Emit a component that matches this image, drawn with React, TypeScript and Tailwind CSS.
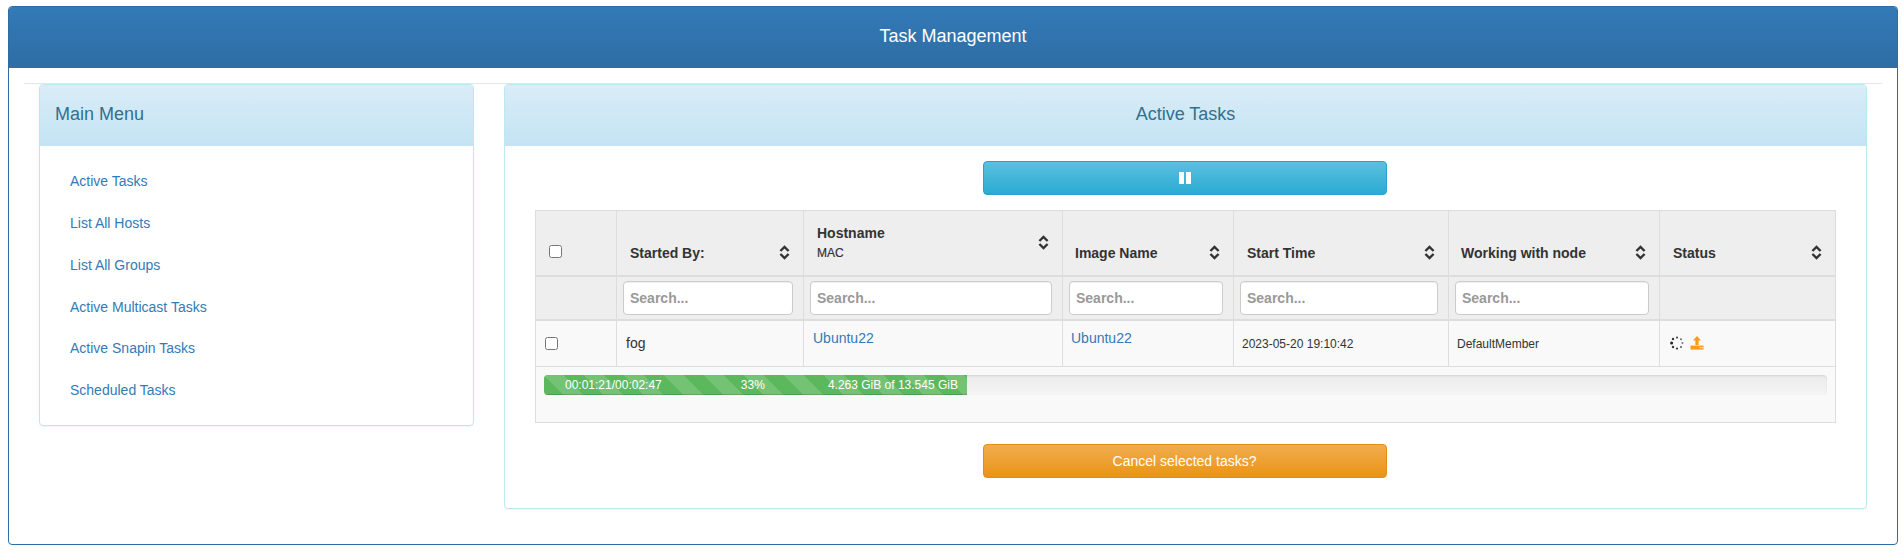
const FONT = "font-['Liberation_Sans',Arial,sans-serif]"

const MENU = [
  'Active Tasks',
  'List All Hosts',
  'List All Groups',
  'Active Multicast Tasks',
  'Active Snapin Tasks',
  'Scheduled Tasks',
]

function SortIcon() {
  return (
    <svg width="11" height="15" viewBox="0 0 11 15" className="shrink-0 text-[#333]" fill="none" stroke="currentColor" strokeWidth="2.4">
      <path d="M1.4 6 5.5 2l4.1 4" />
      <path d="M1.4 9 5.5 13l4.1-4" />
    </svg>
  )
}

function Spinner() {
  const dots = [
    [7, 1.6, 0.8, 1.1],
    [11, 3.2, 0.65, 1],
    [12.4, 7, 0.6, 1],
    [11, 11, 0.75, 1],
    [7, 12.6, 0.85, 1.1],
    [3, 11, 0.9, 1.2],
    [1.6, 7, 1, 1.5],
    [3, 3, 0.9, 1.2],
  ]
  return (
    <svg width="14" height="14" viewBox="0 0 14 14">
      {dots.map(([cx, cy, o, r]) => (
        <circle key={`${cx}-${cy}`} cx={cx} cy={cy} r={r} fill="#222" opacity={o} />
      ))}
    </svg>
  )
}

function UploadIcon() {
  return (
    <svg width="14" height="14" viewBox="0 0 14 14">
      <path d="M7 0 11 4.6H8.6V9H5.4V4.6H3Z" fill="#ff9a14" />
      <path d="M0.5 9.6h13V13.6H0.5Z" fill="#ff9a14" />
      <rect x="9.6" y="11" width="1.2" height="1.2" fill="#fff" />
      <rect x="11.6" y="11" width="1.2" height="1.2" fill="#fff" />
    </svg>
  )
}

function SortHead({ label, tight }: { label: string; tight?: boolean }) {
  return (
    <th className={`border border-[#ddd] border-b-2 pt-[30px] pr-[13px] pb-[12px] align-bottom text-left ${tight ? 'pl-[12px]' : 'pl-[13px]'}`}>
      <div className="flex items-center justify-between leading-[20px]">
        <span>{label}</span>
        <SortIcon />
      </div>
    </th>
  )
}

function SearchCell() {
  return (
    <th className="border border-[#ddd] border-b-2 py-[4px] pr-[10px] pl-[6px]">
      <input
        placeholder="Search..."
        className="block h-[34px] w-full rounded-[4px] border border-[#ccc] bg-white px-[6px] text-[14px] font-bold text-[#555] shadow-[inset_0_1px_1px_rgba(0,0,0,0.075)] placeholder:text-[#999]"
      />
    </th>
  )
}

export default function App() {
  return (
    <div className={`${FONT} bg-white pt-[6px] pr-[4px] pb-[12px] pl-[8px] text-[14px] text-[#333]`}>
      <div className="h-[539px] rounded-[4px] border border-[#2e6da4]">
        <h1 className="flex h-[61px] items-center justify-center rounded-t-[3px] bg-[linear-gradient(to_bottom,#337ab7,#2e6da4)] pb-[2px] text-[18px] font-normal text-white">
          Task Management
        </h1>
        <div className="px-[15px] pt-[15px]">
          <hr className="border-t border-[#e5e5e5]" />
        </div>
        <div className="flex items-start gap-[30px] px-[30px]">
          <aside className="w-[435px] shrink-0 rounded-[4px] border border-[#bce8f1] shadow-[0_1px_1px_rgba(0,0,0,0.05)]">
            <div className="flex h-[61px] items-center rounded-t-[3px] bg-[linear-gradient(to_bottom,#d9edf7,#c4e3f3)] px-[15px] pb-[3px] text-[18px] text-[#31708f]">
              Main Menu
            </div>
            <ul className="pt-[14px] pb-[14px]">
              {MENU.map((item) => (
                <li key={item} className="px-[30px] py-[10.95px] leading-[20px]">
                  <a className="text-[#337ab7]">{item}</a>
                </li>
              ))}
            </ul>
          </aside>

          <main className="min-w-0 flex-1 rounded-[4px] border border-[#bce8f1] shadow-[0_1px_1px_rgba(0,0,0,0.05)]">
            <div className="flex h-[61px] items-center justify-center rounded-t-[3px] bg-[linear-gradient(to_bottom,#d9edf7,#c4e3f3)] pb-[3px] text-[18px] text-[#31708f]">
              Active Tasks
            </div>
            <div className="flex flex-col px-[30px] pt-[15px] pb-[30px]">
              <button className="mx-auto flex h-[34px] w-[404px] -translate-x-px items-center justify-center rounded-[4px] border border-[#28a4c9] bg-[linear-gradient(to_bottom,#5bc0de,#2aabd2)] text-white">
                <svg width="14" height="14" viewBox="0 0 14 14" fill="#fff">
                  <rect x="1" y="1" width="5" height="12" />
                  <rect x="8" y="1" width="5" height="12" />
                </svg>
              </button>

              <table className="mt-[15px] w-full table-fixed border-collapse bg-[#f9f9f9] text-[14px]">
                <colgroup>
                  <col className="w-[81px]" />
                  <col className="w-[187px]" />
                  <col className="w-[259px]" />
                  <col className="w-[171px]" />
                  <col className="w-[215px]" />
                  <col className="w-[211px]" />
                  <col className="w-[176px]" />
                </colgroup>
                <thead className="bg-[#eee] font-bold">
                  <tr className="h-[65px]">
                    <th className="border border-[#ddd] border-b-2 pt-[17px] pl-[13px] text-left align-middle">
                      <input type="checkbox" className="block h-[13px] w-[13px]" />
                    </th>
                    <SortHead label="Started By:" />
                    <th className="border border-[#ddd] border-b-2 px-[13px] text-left align-middle">
                      <div className="flex items-center justify-between">
                        <div>
                          <div className="leading-[20px]">Hostname</div>
                          <div className="mt-[2px] text-[12px] leading-[17px] font-normal [-webkit-text-stroke:0.2px]">MAC</div>
                        </div>
                        <SortIcon />
                      </div>
                    </th>
                    <SortHead label="Image Name" tight />
                    <SortHead label="Start Time" />
                    <SortHead label="Working with node" tight />
                    <SortHead label="Status" />
                  </tr>
                  <tr className="h-[44px]">
                    <th className="border border-[#ddd] border-b-2" />
                    <SearchCell />
                    <SearchCell />
                    <SearchCell />
                    <SearchCell />
                    <SearchCell />
                    <th className="border border-[#ddd] border-b-2" />
                  </tr>
                </thead>
                <tbody>
                  <tr className="h-[47px]">
                    <td className="border border-[#ddd] pl-[9px]">
                      <input type="checkbox" className="block h-[13px] w-[13px]" />
                    </td>
                    <td className="border border-[#ddd] px-[9px]">fog</td>
                    <td className="border border-[#ddd] px-[9px] pb-[10px] text-[#337ab7]">Ubuntu22</td>
                    <td className="border border-[#ddd] px-[8px] pb-[10px] text-[#337ab7]">Ubuntu22</td>
                    <td className="border border-[#ddd] px-[8px] pt-[2px] text-[12px]">2023-05-20 19:10:42</td>
                    <td className="border border-[#ddd] px-[8px] pt-[2px] text-[12px]">DefaultMember</td>
                    <td className="border border-[#ddd] px-[10px]">
                      <div className="flex items-center gap-[6px]">
                        <Spinner />
                        <UploadIcon />
                      </div>
                    </td>
                  </tr>
                  <tr className="h-[55px]">
                    <td colSpan={7} className="border border-[#ddd] px-[8px] pt-[8px] pb-[27px] align-top">
                      <div className="h-[20px] overflow-hidden rounded-[4px] bg-[linear-gradient(to_bottom,#ebebeb,#f5f5f5)] shadow-[inset_0_1px_2px_rgba(0,0,0,0.1)]">
                        <div className="flex h-full w-[423px] items-center justify-between bg-[#5cb85c] bg-[linear-gradient(45deg,rgba(255,255,255,0.15)_25%,transparent_25%,transparent_50%,rgba(255,255,255,0.15)_50%,rgba(255,255,255,0.15)_75%,transparent_75%,transparent)] bg-[length:40px_40px] pr-[9px] pl-[21px] text-[12px] text-white shadow-[inset_0_-1px_0_rgba(0,0,0,0.15)]">
                          <span>00:01:21/00:02:47</span>
                          <span className="pl-[16px]">33%</span>
                          <span>4.263 GiB of 13.545 GiB</span>
                        </div>
                      </div>
                    </td>
                  </tr>
                </tbody>
              </table>

              <button className="mx-auto mt-[21px] flex h-[34px] w-[404px] -translate-x-px items-center justify-center rounded-[4px] border border-[#e38d13] bg-[linear-gradient(to_bottom,#f0ad4e,#eb9316)] text-white">
                Cancel selected tasks?
              </button>
            </div>
          </main>
        </div>
      </div>
    </div>
  )
}
